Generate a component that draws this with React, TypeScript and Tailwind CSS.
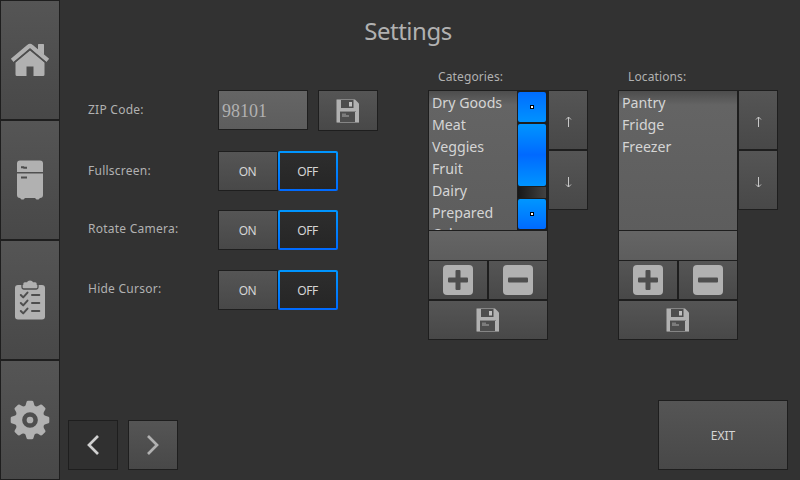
import React from "react";

const raised = "bg-linear-to-b from-[#555555] to-[#484848] border border-[#1e1e1e]";
const field = "bg-linear-to-b from-[#656565] to-[#5d5d5d] border-[#1e1e1e]";
const ui = "font-['Noto_Sans',sans-serif]";

function HomeIcon() {
  return (
    <svg width="40" height="34" viewBox="0 0 40 34" fill="#b1b1b1">
      <path d="M28 1.500q0-.500.500-.500h5q.500 0 .500.500V12l-6-5z" />
      <path d="M2.200 17.300 18.500 3.600q1.500-1.200 3 0L37.800 17.300" fill="none" stroke="#b1b1b1" strokeWidth="4.200" strokeLinejoin="round" />
      <path d="M20 7.500 34.500 19.500v12q0 1.500-1.500 1.500h-9.500V23.500h-7V33H7q-1.500 0-1.500-1.500v-12z" />
      <path d="M4.500 19.200 20 6.200 35.500 19.200" fill="none" stroke="#4e4e4e" strokeWidth="1.200" />
    </svg>
  );
}

function FridgeIcon() {
  return (
    <svg width="26" height="40" viewBox="0 0 26 40" fill="#b1b1b1">
      <path d="M3 .5h20q3 0 3 3v8.500H0V3.500q0-3 3-3zM0 13.500h26V35q0 3-3 3l-1.500 1.500h-2L18 38H8l-1.500 1.500h-2L3 38q-3 0-3-3z" />
      <path d="M4 7.200h2.500l.5.500H10M4 17.500h6" fill="none" stroke="#4e4e4e" strokeWidth="2" />
    </svg>
  );
}

function ClipboardIcon() {
  return (
    <svg width="30" height="40" viewBox="0 0 30 40">
      <rect y="5" width="30" height="34.500" rx="3" fill="#b1b1b1" />
      <path d="M7 4.500v2.800Q7 9 8.700 9h12.600Q23 9 23 7.300V4.500" fill="none" stroke="#4e4e4e" strokeWidth="1.300" />
      <path d="M8.300 3.800q0-1.500 1.500-1.500H12q.5-1.900 3-1.900t3 1.900h2.200q1.500 0 1.500 1.500v2.400q0 1.500-1.500 1.500H9.800q-1.500 0-1.500-1.500z" fill="#b1b1b1" />
      <g fill="none" stroke="#4e4e4e" strokeWidth="2" strokeLinecap="round" strokeLinejoin="round">
        <path d="m5.800 15 2.400 2.400 4.300-4.800M5.800 23l2.400 2.400 4.300-4.800M5.800 31l2.400 2.400 4.300-4.800M17 15h7.300M17 23h7.300M17 31h7.300" />
      </g>
    </svg>
  );
}

function GearIcon() {
  return (
    <svg width="40" height="40" viewBox="-20 -20 40 40">
      <g fill="#b1b1b1">
        <circle r="14.800" />
        {[0, 45, 90, 135, 180, 225, 270, 315].map((a) => (
          <path key={a} d="M-5.500-13 Q-4-15-3.300-18.500Q-3-19.300-2-19.300H2Q3-19.300 3.300-18.500Q4-15 5.500-13z" transform={`rotate(${a})`} />
        ))}
      </g>
      <circle r="5.600" fill="none" stroke="#4e4e4e" strokeWidth="4.500" />
    </svg>
  );
}

function SaveIcon() {
  return (
    <svg width="24" height="24" viewBox="0 0 24 24">
      <path d="M.5.500h18.500l4 4v19H.500z" fill="#b1b1b1" />
      <path d="M5 1h12.500v8H5zM4 13h15v10H4z" fill="#4e4e4e" />
      <path d="M13 3h3v4.500h-3z" fill="#c0c0c0" />
      <path d="M1 .500h18M4 12.500h16M1 23.500h22" stroke="#858585" />
      <path d="M6 14.500h4v1.500h3v2H6z" fill="#7c7c7c" />
    </svg>
  );
}

function SquareIcon({ plus = false }: { plus?: boolean }) {
  return (
    <svg width="30" height="30" viewBox="0 0 30 30">
      <rect width="30" height="30" rx="4" fill="#b1b1b1" />
      <rect x="5" y="12.500" width="20" height="5" rx="1" fill="#4e4e4e" />
      {plus && <rect x="12.500" y="5" width="5" height="20" rx="1" fill="#4e4e4e" />}
    </svg>
  );
}

function Chevron({ right = false }: { right?: boolean }) {
  return (
    <svg width="14" height="22" viewBox="0 0 14 22" fill="none" stroke={right ? "#b1b1b1" : "#d0d0d0"} strokeWidth="2.700">
      <path d={right ? "m2 2 9 9-9 9" : "m12 2-9 9 9 9"} />
    </svg>
  );
}

function Arrow({ down = false }: { down?: boolean }) {
  return (
    <svg width="7" height="11" viewBox="0 0 7 11" className={down ? "rotate-180" : ""} fill="none" stroke="#c8c8c8">
      <path d="M3.500 11V1M1 3.500 3.500 1 6 3.500" />
    </svg>
  );
}

function Toggle({ label, className, labelTop }: { label: string; className: string; labelTop: string }) {
  return (
    <div className={`flex h-10 ${className}`}>
      <span className={`w-[130px] text-[12px] leading-4 tracking-[0.250px] text-[#b1b1b1] ${labelTop}`}>{label}</span>
      <button className={`w-[60px] pt-px pr-px text-[12px] tracking-[-0.600px] text-[#d5d5d5] ${raised}`}>ON</button>
      <span className="h-10 w-[60px] rounded-[2px] bg-linear-to-b from-[#0096ff] to-[#006aff] p-[2px]">
        <button className="h-full w-full bg-linear-to-b from-[#2d2d2d] to-[#262626] pt-px pr-px text-[12px] tracking-[-0.500px] text-[#d5d5d5]">OFF</button>
      </span>
    </div>
  );
}

function ScrollButton({ up = false }: { up?: boolean }) {
  return (
    <div className={`flex h-[30px] w-7 items-center justify-center rounded-[2px] ${up ? "bg-linear-to-b from-[#006cff] to-[#0092ff]" : "bg-linear-to-b from-[#0096ff] to-[#006aff]"}`}>
      <div className="size-1 border border-black bg-white" />
    </div>
  );
}

function ListPanel({ title, items, scroll = false }: { title: string; items: string[]; scroll?: boolean }) {
  return (
    <section className="flex w-[190px] shrink-0 flex-col">
      <h2 className="h-7 pt-[7px] pl-[10px] text-[12px] leading-4 tracking-[0.120px] text-[#b1b1b1]">{title}</h2>
      <div className="flex">
        <div className="w-[120px]">
          <div className="flex h-[140px] overflow-hidden border border-b-0 border-[#1e1e1e] bg-[linear-gradient(#4d4d4d,#646464_14px,#5d5d5d)]">
            <ul className="flex-1 pt-px pl-[3px] text-[14.200px] leading-[22px] whitespace-nowrap text-[#d5d5d5]">
              {items.map((item) => <li key={item} className="nth-[7]:-mt-px">{item}</li>)}
            </ul>
            {scroll && (
              <div className="flex w-[30px] flex-col gap-px border-l border-[#1e1e1e] bg-[#1e1e1e] pt-px pr-px">
                <ScrollButton up />
                <div className="mt-px h-[62px] rounded-[2px] bg-linear-to-b from-[#0094ff] via-[#0069ff] to-[#0094ff]" />
                <div className="h-[11px] bg-linear-to-r from-[#181818] to-[#434343]" />
                <ScrollButton />
              </div>
            )}
          </div>
          <div className={`h-[30px] border border-b-0 ${field}`} />
          <div className="flex">
            <button className={`flex h-10 w-[60px] items-center justify-center ${raised}`}><SquareIcon plus /></button>
            <button className={`flex h-10 w-[60px] items-center justify-center ${raised}`}><SquareIcon /></button>
          </div>
          <button className={`flex h-10 w-[120px] items-center justify-center ${raised}`}><SaveIcon /></button>
        </div>
        <div>
          <button className={`flex h-[60px] w-10 items-center justify-center pt-[3px] ${raised}`}><Arrow /></button>
          <button className={`flex h-[60px] w-10 items-center justify-center pt-[5px] ${raised}`}><Arrow down /></button>
        </div>
      </div>
    </section>
  );
}

export default function App() {
  return (
    <div className={`flex h-[480px] w-[800px] overflow-hidden bg-[#323232] ${ui}`}>
      <nav className="flex w-[60px] shrink-0 flex-col">
        {[HomeIcon, FridgeIcon, ClipboardIcon, GearIcon].map((Icon, i) => (
          <button key={i} className={`flex h-[120px] items-center justify-center ${raised}`}><Icon /></button>
        ))}
      </nav>
      <main className="flex w-[740px] flex-col">
        <h1 className="h-[62px] pt-[15px] pr-[44px] text-center text-[24px] leading-8 tracking-[-0.5px] text-[#b1b1b1]">Settings</h1>
        <div className="flex h-[338px] pl-7">
          <div className="w-[340px] shrink-0 pt-7">
            <div className="flex h-[41px]">
              <label className="w-[130px] pt-3 text-[12px] leading-4 tracking-[0.250px] text-[#b1b1b1]">ZIP Code:</label>
              <div className={`mr-[10px] h-10 w-[90px] border pt-[8px] pl-[3px] font-['Liberation_Serif',serif] text-[18px] leading-6 text-[#b1b1b1] ${field}`}>98101</div>
              <button className={`flex h-[41px] w-[60px] items-center justify-center ${raised}`}><SaveIcon /></button>
            </div>
            <Toggle label="Fullscreen:" className="mt-5" labelTop="pt-3" />
            <Toggle label="Rotate Camera:" className="mt-[19px]" labelTop="pt-[11px]" />
            <Toggle label="Hide Cursor:" className="mt-5" labelTop="pt-[11px]" />
          </div>
          <ListPanel title="Categories:" items={["Dry Goods", "Meat", "Veggies", "Fruit", "Dairy", "Prepared", "Cakes"]} scroll />
          <ListPanel title="Locations:" items={["Pantry", "Fridge", "Freezer"]} />
        </div>
        <footer className="flex h-20 pl-2">
          <button className="mt-5 mr-[10px] flex size-[50px] items-center justify-center border border-[#1e1e1e] bg-[#303030]"><Chevron /></button>
          <button className={`mt-5 flex size-[50px] items-center justify-center ${raised}`}><Chevron right /></button>
          <button className={`mr-3 ml-auto h-[70px] w-[130px] pt-[2px] text-[12px] text-[#d5d5d5] ${raised}`}>EXIT</button>
        </footer>
      </main>
    </div>
  );
}
